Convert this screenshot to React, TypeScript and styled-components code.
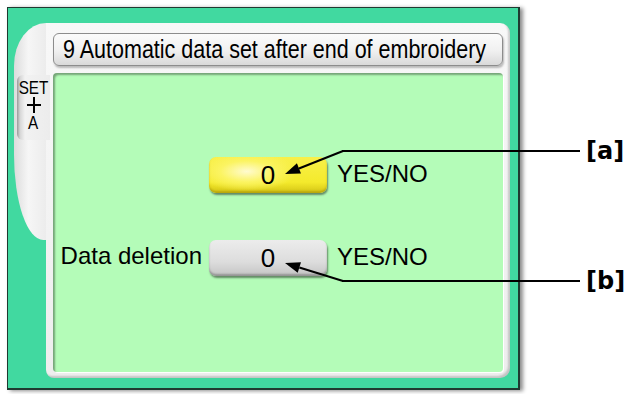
import styled, { createGlobalStyle } from "styled-components";

const GlobalStyle = createGlobalStyle`
  html, body {
    margin: 0;
    padding: 0;
    background: #ffffff;
  }
  body {
    font-family: "Liberation Sans", Arial, sans-serif;
  }
`;

// page
const Page = styled.div`
  position: relative;
  width: 628px;
  height: 394px;
  padding: 7px 0 0 7px;
  box-sizing: border-box;
`;

// the green machine screen
const Screen = styled.div`
  width: 513px;
  height: 383px;
  box-sizing: border-box;
  background: #41d9a0;
  border: 1px solid #1f3a30;
  border-right-width: 2px;
  border-bottom-width: 2px;
  box-shadow: 3px 1px 4px rgba(0, 0, 0, 0.45);
  padding: 15px 8px 10px 6px;
  display: flex;
  align-items: flex-start;
`;

const Wing = styled.div`
  width: 32px;
  height: 217px;
  flex-shrink: 0;
  background: linear-gradient(90deg, #dcdcdc 0%, #f6f6f6 45%, #ececec 100%);
  border-radius: 36px 0 0 33px / 48px 0 0 96px;
  padding: 52px 0 0 3px;
  box-sizing: border-box;
`;

const Tab = styled.div`
  position: relative;
  z-index: 1;
  width: 33px;
  height: 65px;
  box-sizing: border-box;
  border-radius: 6px 0 0 6px;
  background: linear-gradient(90deg, #9a9a9a 0px, #d6d6d6 3px, #f2f2f2 8px, #ececec 100%);
  display: flex;
  flex-direction: column;
  align-items: center;
  padding-top: 5px;
  color: #000;
`;

const TabText = styled.span`
  font-size: 18px;
  line-height: 16px;
  display: block;
  transform: scaleX(0.85);
`;

const Plus = styled.span`
  position: relative;
  width: 14px;
  height: 16px;
  margin: 1px 0 2px;
  &::before,
  &::after {
    content: "";
    position: absolute;
    background: #000;
  }
  &::before {
    left: 0;
    right: 0;
    top: 7px;
    height: 2px;
  }
  &::after {
    top: 0;
    bottom: 0;
    left: 6px;
    width: 2px;
  }
`;

const Frame = styled.div`
  width: 464px;
  height: 355px;
  box-sizing: border-box;
  background: linear-gradient(180deg, #f8f8f8 0%, #eeeeee 100%);
  border-radius: 0 10px 10px 8px;
  box-shadow: inset -2px -2px 2px rgba(0, 0, 0, 0.18);
  padding: 10px 7px 6px 7px;
  display: flex;
  flex-direction: column;
  gap: 7px;
`;

const TitleBar = styled.div`
  height: 33px;
  box-sizing: border-box;
  border: 1px solid #8c8c8c;
  border-radius: 6px;
  background: linear-gradient(180deg, #fbfbfb 0%, #f0f0f0 55%, #d9d9d9 100%);
  box-shadow: 1px 2px 2px rgba(0, 0, 0, 0.25);
  padding-left: 9px;
  display: flex;
  align-items: center;
  color: #000;
  white-space: nowrap;
`;

const TitleText = styled.span`
  font-size: 25px;
  display: block;
  transform: scaleX(0.86);
  transform-origin: left center;
`;

const Panel = styled.div`
  flex: 1;
  background: #b4fcb8;
  border-radius: 4px;
  box-shadow: inset 2px 2px 2px rgba(0, 0, 0, 0.35), 1px 1px 0 #ffffff;
  padding: 84px 0 0 0;
  display: grid;
  grid-template-columns: 149px 118px auto;
  column-gap: 7px;
  row-gap: 47px;
  align-content: start;
  align-items: center;
`;

const Label = styled.div`
  font-size: 24px;
  color: #000;
  text-align: right;
  white-space: nowrap;
  margin-top: -4px;
`;

const ValueButton = styled.div<{ $tone: "yellow" | "grey" }>`
  height: 36px;
  border-radius: 7px;
  display: flex;
  align-items: center;
  justify-content: center;
  font-size: 26px;
  color: #000;
  background: ${(p) =>
    p.$tone === "yellow"
      ? "radial-gradient(ellipse 50% 65% at 32% 40%, #fffbd0 0%, #fbf462 45%, rgba(246,238,40,0) 85%), linear-gradient(180deg, #f8f04a 0%, #f4ea2c 70%, #d4c414 100%)"
      : "linear-gradient(180deg, #ececec 0%, #dddddd 60%, #c4c4c4 100%)"};
  box-shadow: 1px 2px 2px rgba(0, 0, 0, 0.45),
    inset 0 -2px 2px ${(p) => (p.$tone === "yellow" ? "rgba(150,130,0,0.45)" : "rgba(0,0,0,0.25)")};
`;

const Unit = styled.div`
  font-size: 24px;
  color: #000;
  margin-left: 3px;
  margin-top: -2px;
`;

// callout overlay
const Callouts = styled.svg`
  position: absolute;
  left: 0;
  top: 0;
  pointer-events: none;
`;

const CalloutLabel = styled.div<{ $top: number }>`
  position: absolute;
  left: 586px;
  top: ${(p) => p.$top}px;
  font-family: "DejaVu Sans", sans-serif;
  font-weight: bold;
  font-size: 24px;
  line-height: 32px;
  color: #000;
`;

const Arrow = ({ x1, y1, x2, y2 }: { x1: number; y1: number; x2: number; y2: number }) => {
  const a = Math.atan2(y2 - y1, x2 - x1);
  const len = 15;
  const w = 5.5;
  const bx = x2 - Math.cos(a) * len;
  const by = y2 - Math.sin(a) * len;
  const px = -Math.sin(a) * w;
  const py = Math.cos(a) * w;
  return (
    <>
      <line x1={x1} y1={y1} x2={bx} y2={by} stroke="#000" strokeWidth={2} />
      <polygon points={`${x2},${y2} ${bx + px},${by + py} ${bx - px},${by - py}`} fill="#000" />
    </>
  );
};

const App = () => {
  return (
    <Page>
      <GlobalStyle />
      <Screen>
        <Wing>
          <Tab>
            <TabText>SET</TabText>
            <Plus />
            <TabText>A</TabText>
          </Tab>
        </Wing>
        <Frame>
          <TitleBar>
            <TitleText>9 Automatic data set after end of embroidery</TitleText>
          </TitleBar>
          <Panel>
            <Label />
            <ValueButton $tone="yellow">0</ValueButton>
            <Unit>YES/NO</Unit>
            <Label>Data deletion</Label>
            <ValueButton $tone="grey">0</ValueButton>
            <Unit>YES/NO</Unit>
          </Panel>
        </Frame>
      </Screen>

      <Callouts width={628} height={394}>
        <line x1={342} y1={151} x2={580} y2={151} stroke="#000" strokeWidth={2} />
        <Arrow x1={343} y1={151} x2={285} y2={174} />
        <line x1={342} y1={281} x2={580} y2={281} stroke="#000" strokeWidth={2} />
        <Arrow x1={343} y1={281} x2={285} y2={263} />
      </Callouts>
      <CalloutLabel $top={135}>[a]</CalloutLabel>
      <CalloutLabel $top={265}>[b]</CalloutLabel>
    </Page>
  );
};

export default App;
